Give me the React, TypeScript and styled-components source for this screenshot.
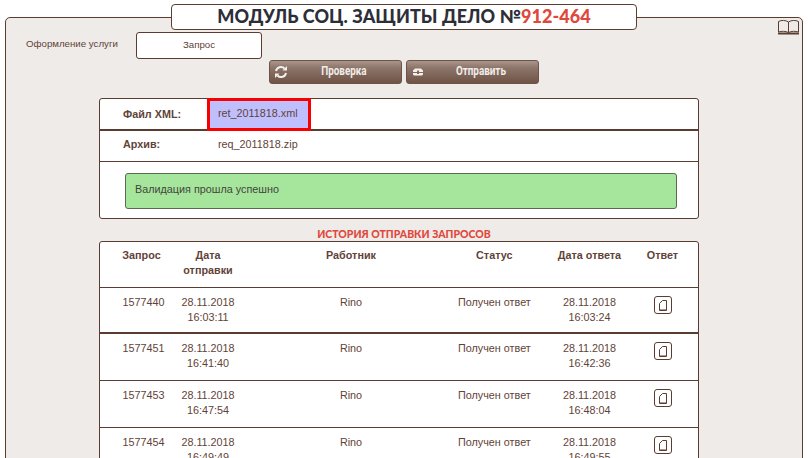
import React from "react";
import styled, { createGlobalStyle } from "styled-components";

const Global = createGlobalStyle`
  html, body { margin: 0; padding: 0; background: #fff; height: 458px; overflow: hidden; }
  body { font-family: "Liberation Sans", Arial, sans-serif; font-size: 10.8px; color: #5f4338; }
`;

const Page = styled.div`
  width: 811px;
  height: 458px;
  overflow: hidden;
  padding-top: 4px;
  box-sizing: border-box;
`;
const Title = styled.h1`
  position: relative;
  z-index: 1;
  box-sizing: border-box;
  width: 466px;
  height: 26px;
  margin: 0 0 -13px 171px;
  background: #fff;
  border: 1px solid #5a3c30;
  border-radius: 4px;
  text-align: center;
  font: 900 18px/23px Lato, sans-serif;
  letter-spacing: 0.05px;
  color: #2e2e38;
`;
const Accent = styled.span`
  color: #e0483c;
`;
const Panel = styled.main`
  position: relative;
  box-sizing: border-box;
  width: 798px;
  height: 460px;
  margin-left: 5px;
  background: #efebe8;
  border: 1px solid #5a3c30;
  border-radius: 5px;
  padding-top: 14px;
`;
const BookMark = styled.svg`
  position: absolute;
  top: 1px;
  right: 2px;
  width: 23px;
  height: 16px;
`;
const ServiceRow = styled.div`
  display: flex;
  align-items: flex-start;
`;
const ServiceLabel = styled.span`
  width: 130px;
  padding: 5px 0 0 20px;
  box-sizing: border-box;
  font-size: 9.7px;
  line-height: 13px;
`;
const ServiceBox = styled.div`
  box-sizing: border-box;
  width: 126px;
  height: 27px;
  background: #fff;
  border: 1px solid #5a3c30;
  border-radius: 3px;
  text-align: center;
  font-size: 9.7px;
  line-height: 24px;
`;
const Actions = styled.div`
  display: flex;
  gap: 4px;
  margin: 1px 0 0 263px;
`;
const ActionButton = styled.button`
  position: relative;
  box-sizing: border-box;
  width: 133px;
  height: 24px;
  padding: 0 0 3px 17px;
  background: linear-gradient(#a8968c 0%, #8e766a 30%, #6f5347 100%);
  border: 1px solid #6f5347;
  border-radius: 3px;
  color: #f0ece8;
  font: 700 13px/18px Roboto, sans-serif;
  svg {
    position: absolute;
    left: 4px;
    top: 4px;
  }
`;
const ActionLabel = styled.span`
  display: inline-block;
  transform: scaleX(0.76);
`;
const Card = styled.section`
  box-sizing: border-box;
  width: 600px;
  margin: 14px 0 0 93px;
  height: 121px;
  background: #fff;
  border: 1px solid #5a3c30;
  border-radius: 3px;
`;
const FileRow = styled.div<{ $thick?: boolean; $h: number; $pad?: number }>`
  display: flex;
  align-items: center;
  box-sizing: border-box;
  height: ${(p) => p.$h}px;
  padding-bottom: ${(p) => p.$pad ?? 0}px;
  border-bottom: ${(p) => (p.$thick ? 2 : 1)}px solid #5a3c30;
`;
const FileLabel = styled.b`
  width: 107px;
  padding-left: 23px;
  box-sizing: border-box;
`;
const FileName = styled.span`
  padding-left: 11px;
  font-size: 10.8px;
`;
const SelectedFile = styled.span`
  box-sizing: border-box;
  width: 104px;
  height: 33px;
  margin-top: 1px;
  padding-left: 8px;
  background: #bfbffd;
  border: 3px solid #f80000;
  font-size: 10.8px;
  line-height: 25px;
`;
const Notice = styled.div`
  box-sizing: border-box;
  width: 552px;
  height: 36px;
  margin: 11px 0 0 25px;
  padding-left: 9px;
  background: #a6e69c;
  border: 1px solid #5a6a50;
  border-radius: 3px;
  color: #44443c;
  line-height: 31px;
`;
const HistoryTitle = styled.h2`
  margin: 8px 0 0;
  text-align: center;
  font: 900 10.5px/14px Lato, sans-serif;
  color: #e0483c;
  height: 14px;
`;
const Table = styled.section`
  box-sizing: border-box;
  width: 600px;
  margin-left: 93px;
  background: #fff;
  border: 1px solid #5a3c30;
  border-radius: 3px 3px 0 0;
`;
const Row = styled.div<{ $header?: boolean; $thick?: boolean; $h: number }>`
  display: grid;
  grid-template-columns: 76px 64px 218px 88.5px 86px 60px;
  box-sizing: border-box;
  height: ${(p) => p.$h}px;
  padding-top: ${(p) => (p.$header ? 6 : 7)}px;
  border-bottom: ${(p) => (p.$thick ? 2 : 1)}px solid #5a3c30;
  line-height: 15px;
  text-align: center;
  white-space: nowrap;
  font-weight: ${(p) => (p.$header ? 700 : 400)};
  & > :nth-child(1) { padding-left: ${(p) => (p.$header ? 7 : 11)}px; }
  & > :nth-child(3) { padding-left: 4px; }
  & > :nth-child(4) { padding-right: 16px; }
`;
const Cell = styled.div``;
const FileButton = styled.span`
  display: inline-flex;
  align-items: center;
  justify-content: center;
  box-sizing: border-box;
  width: 18px;
  height: 18px;
  margin-top: 1px;
  border: 1px solid #5a3c30;
  border-radius: 3px;
`;

const RefreshIcon = () => (
  <svg width="14" height="14" viewBox="0 0 14 14" fill="none" stroke="#f4f0ec" strokeWidth="2">
    <path d="M2 6a5 5 0 0 1 8.500-2.500" />
    <path d="M12 8a5 5 0 0 1-8.500 2.500" />
    <path d="M13 1v4.500H8.500z" fill="#f4f0ec" stroke="none" />
    <path d="M1 13V8.500h4.500z" fill="#f4f0ec" stroke="none" />
  </svg>
);
const SendIcon = () => (
  <svg width="14" height="14" viewBox="0 0 14 14" fill="#f4f0ec">
    <path d="M2 5.500 4 3.500h6l2 2V7H8V5.500H6V7H2zM2 8h4v1h2V8h4v1.500L11 10.500H3L2 9.500z" />
  </svg>
);
const FileIcon = () => (
  <svg width="10" height="13" viewBox="0 0 10 13" fill="none">
    <path d="M1.500 4.500 4.500 1.500H8.500V11.500H1.500z" stroke="#5a3c30" />
    <path d="M2 10h6v1H2z" fill="#b09a90" />
  </svg>
);

const rows = [
  ["1577440", "16:03:11", "16:03:24", 46],
  ["1577451", "16:41:40", "16:42:36", 47],
  ["1577453", "16:47:54", "16:48:04", 47],
  ["1577454", "16:49:49", "16:49:55", 46],
] as const;

export default function App() {
  return (
    <Page>
      <Global />
      <Title>
        МОДУЛЬ СОЦ. ЗАЩИТЫ ДЕЛО №<Accent>912-464</Accent>
      </Title>
      <Panel>
        <BookMark viewBox="0 0 23 16" fill="none" stroke="#5a3c30">
          <path d="M1.500 13V2.500C4.500 1 8.500 1 11.500 3C14.500 1 18.500 1 21.500 2.500V13C18.500 12 14.500 12 11.500 13.500C8.500 12 4.500 12 1.500 13Z" />
          <path d="M11.500 3V13.500" />
          <path d="M1 14.500H22" strokeWidth="2" />
        </BookMark>
        <ServiceRow>
          <ServiceLabel>Оформление услуги</ServiceLabel>
          <ServiceBox>Запрос</ServiceBox>
        </ServiceRow>
        <Actions>
          <ActionButton>
            <RefreshIcon />
            <ActionLabel>Проверка</ActionLabel>
          </ActionButton>
          <ActionButton>
            <SendIcon />
            <ActionLabel>Отправить</ActionLabel>
          </ActionButton>
        </Actions>
        <Card>
          <FileRow $thick $h={32}>
            <FileLabel>Файл XML:</FileLabel>
            <SelectedFile>ret_2011818.xml</SelectedFile>
          </FileRow>
          <FileRow $h={31} $pad={4}>
            <FileLabel>Архив:</FileLabel>
            <FileName>req_2011818.zip</FileName>
          </FileRow>
          <Notice>Валидация прошла успешно</Notice>
        </Card>
        <HistoryTitle>ИСТОРИЯ ОТПРАВКИ ЗАПРОСОВ</HistoryTitle>
        <Table>
          <Row $header $h={46}>
            <Cell>Запрос</Cell>
            <Cell>
              Дата
              <br />
              отправки
            </Cell>
            <Cell>Работник</Cell>
            <Cell>Статус</Cell>
            <Cell>Дата ответа</Cell>
            <Cell>Ответ</Cell>
          </Row>
          {rows.map(([id, sent, answered, h], i) => (
            <Row key={id} $h={h} $thick={i === 0}>
              <Cell>{id}</Cell>
              <Cell>
                28.11.2018
                <br />
                {sent}
              </Cell>
              <Cell>Rino</Cell>
              <Cell>Получен ответ</Cell>
              <Cell>
                28.11.2018
                <br />
                {answered}
              </Cell>
              <Cell>
                <FileButton>
                  <FileIcon />
                </FileButton>
              </Cell>
            </Row>
          ))}
        </Table>
      </Panel>
    </Page>
  );
}
